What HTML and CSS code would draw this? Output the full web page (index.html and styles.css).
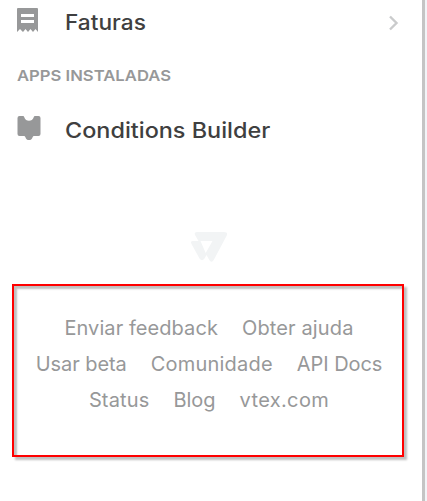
FILE: index.html
```html
<!DOCTYPE html>
<html lang="pt">
<head>
<meta charset="utf-8">
<title>Menu</title>
<link rel="stylesheet" href="styles.css">
</head>
<body>
<aside class="sidebar">
  <a class="item item-first">
    <svg class="icon" width="24" height="26" viewBox="0 0 24 26"><path fill="#979899" fill-rule="evenodd" d="M1 0H20Q21 0 21 1V24L18.500 21L16 24L13.500 21L11 24L8.500 21L6 24L3 21L0 24V1Q0 0 1 0ZM4 6V9H17V6ZM4 12V15H17V12Z"/></svg>
    <span class="label faturas">Faturas</span>
    <svg class="chevron" width="12" height="16" viewBox="0 0 12 16"><path fill="none" stroke="#cacbcc" stroke-width="2.400" d="M2 1.500L8.500 8L2 14.500"/></svg>
  </a>
  <h2 class="section">APPS INSTALADAS</h2>
  <a class="item">
    <svg class="icon icon-app" width="24" height="26" viewBox="0 0 24 26"><path fill="#979899" d="M2.500 0H6Q7 0 7.300 1.200C8.500 6 15.500 6 16.700 1.200Q17 0 18 0H21.500Q23.500 0 23.500 2V18Q23.500 20 21.500 20H17Q16 20 15.600 21.200C14.500 25 9.500 25 8.400 21.200Q8 20 7 20H2.500Q.5 20 .5 18V2Q.5 0 2.500 0Z"/></svg>
    <span class="label conditions">Conditions Builder</span>
  </a>
  <div class="brand">
    <svg width="37" height="31" viewBox="0 0 37 31"><path fill="#f2f4f5" fill-rule="evenodd" d="M6 0H33Q37.500 0 35.500 4L23 27.500Q20.500 32 18 27.500L15.500 23L13.500 26.500Q11 30 8.500 26.500L.5 12Q-1 9 2 9H7.500L4.300 3.500Q2.500 0 6 0ZM9.500 9L14.700 21L21.500 9Z"/></svg>
  </div>
  <footer class="links">
    <div class="row"><a class="feedback">Enviar feedback</a><a class="help">Obter ajuda</a></div>
    <div class="row"><a class="beta">Usar beta</a><a class="community">Comunidade</a><a class="docs">API Docs</a></div>
    <div class="row"><a class="status">Status</a><a class="blog">Blog</a><a class="site">vtex.com</a></div>
  </footer>
</aside>
</body>
</html>
```
FILE: styles.css
```css
* { box-sizing: border-box; }
body { margin: 0; background: #f2f4f7; overflow: hidden; font-family: Inter, "Liberation Sans", sans-serif; }
.sidebar { width: 425px; height: 501px; background: #fff; border-right: 3px solid #c4c4c4; display: flex; flex-direction: column; }
.item { display: flex; align-items: center; height: 36px; padding: 0 22px 0 17px; }
.item-first { margin-top: 4px; height: 37px; }
.item-first .icon { margin-top: -3px; }
.icon { flex: none; }
.icon-app { margin-top: -5px; }
.label { margin-left: 24px; font-size: 21px; font-weight: 550; line-height: 36px; color: #3f3f40; white-space: nowrap; transform-origin: left center; }
.faturas { transform: scaleX(1.08); }
.conditions { transform: scaleX(1.115); }
.chevron { margin-left: auto; }
.section { margin: 23px 0 25px 17px; width: max-content; font-size: 15px; line-height: 24px; font-weight: 600; color: #979899; white-space: nowrap; transform: scaleX(1.11); transform-origin: left center; }
.brand { display: flex; justify-content: center; margin: 83px 0 21px; padding-right: 4px; }
.links { width: 392px; height: 173px; margin-left: 12px; padding: 24px 0 0 2px; border: 2px solid #f00; box-shadow: 3px 3px 2px #c0c0c0, inset 3px 3px 2px #c0c0c0; color: #979899; font-size: 20px; line-height: 36px; }
.row { display: flex; justify-content: center; gap: 24px; white-space: nowrap; }
.feedback { letter-spacing: .07px; }
.help { letter-spacing: .14px; }
.community { letter-spacing: .2px; }
.beta { letter-spacing: -.05px; }
.docs { letter-spacing: -.05px; }
.status { letter-spacing: .15px; }
.site { letter-spacing: .35px; }
```
